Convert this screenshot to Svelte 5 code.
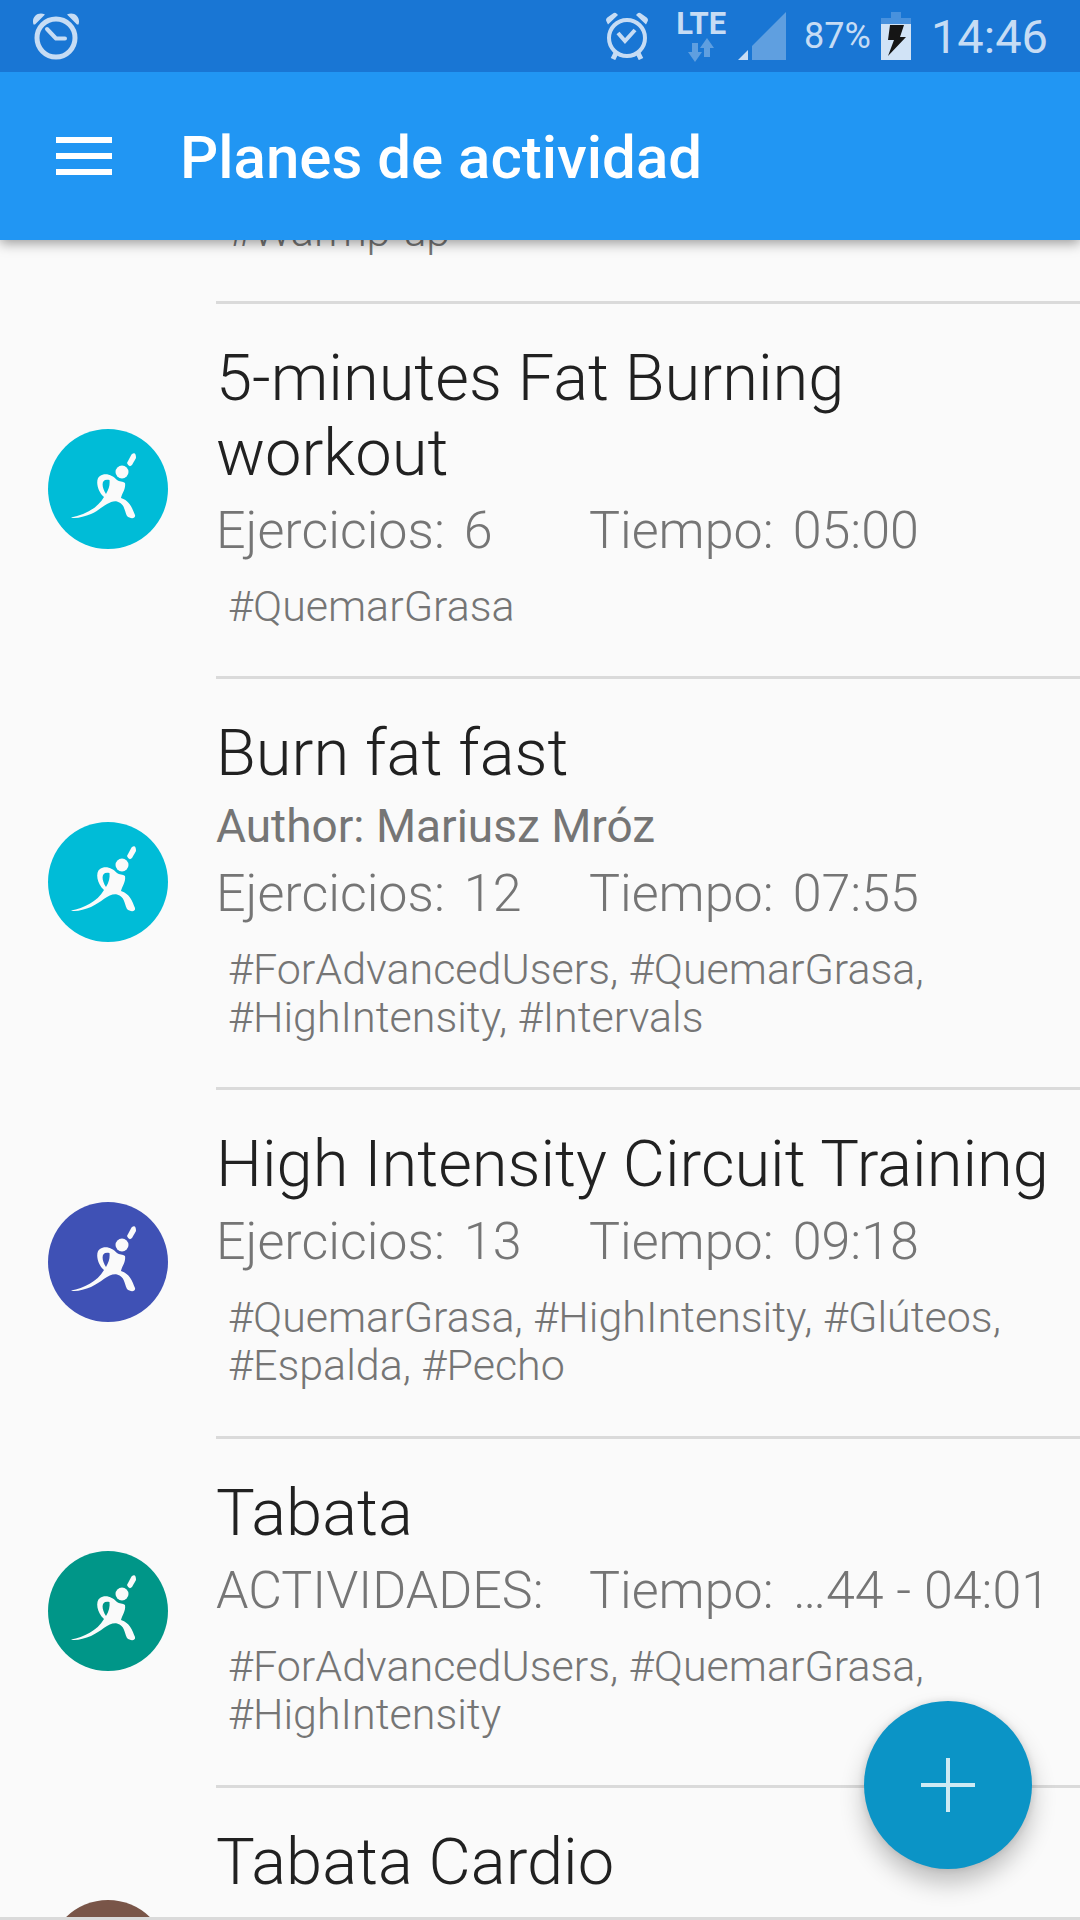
<script>
  const plans = [
    { id: 1, tags: "#Warmp-up" },
    {
      id: 2,
      name: "5-minutes Fat Burning workout",
      color: "#00bcd7",
      countLabel: "Ejercicios:",
      count: "6",
      time: "05:00",
      tags: "#QuemarGrasa"
    },
    {
      id: 3,
      name: "Burn fat fast",
      author: "Mariusz Mróz",
      color: "#00bcd7",
      countLabel: "Ejercicios:",
      count: "12",
      time: "07:55",
      tags: "#ForAdvancedUsers, #QuemarGrasa, #HighIntensity, #Intervals"
    },
    {
      id: 4,
      name: "High Intensity Circuit Training",
      color: "#3f51b5",
      countLabel: "Ejercicios:",
      count: "13",
      time: "09:18",
      tags: "#QuemarGrasa, #HighIntensity, #Glúteos, #Espalda, #Pecho"
    },
    {
      id: 5,
      name: "Tabata",
      color: "#009688",
      countLabel: "ACTIVIDADES:",
      count: "",
      time: "…44 - 04:01",
      tags: "#ForAdvancedUsers, #QuemarGrasa, #HighIntensity"
    },
    { id: 6, name: "Tabata Cardio", color: "#795548" }
  ]
</script>

<div class="screen">
  <div class="status">
    <svg class="alarm" viewBox="0 0 48 48" width="48" height="48">
      <circle cx="24" cy="26" r="19" fill="none" stroke="currentColor" stroke-width="5" />
      <path d="M15 17l9 9.500h9" fill="none" stroke="currentColor" stroke-width="4" stroke-linecap="round" stroke-linejoin="round" />
      <path d="M1.500 12.500C-1 5 6 -1 13 2.500L3 12.500zM46.500 12.500C49 5 42 -1 35 2.500L45 12.500z" fill="currentColor" />
    </svg>
    <div class="right">
      <svg viewBox="0 0 44 48" width="44" height="48">
        <circle cx="22" cy="26" r="18" fill="none" stroke="currentColor" stroke-width="4" />
        <path d="M13 21l7 8 10-11" fill="none" stroke="currentColor" stroke-width="4" />
        <path d="M3 12.500l-1.500-3Q0 7 3 5L8 1.500q2-1.500 4 .500l1 1zM41 12.500l1.500-3Q44 7 41 5L36 1.500q-2-1.500-4 .500l-1 1z" fill="currentColor" />
        <path d="M11 41l-3 6M33 41l3 6" stroke="currentColor" stroke-width="5" />
      </svg>
      <div class="network">
        <span>LTE</span>
        <svg viewBox="0 0 28 24" width="28" height="24">
          <path d="M5 5h6v9h4l-7 10-7-10h4zM17 19h6v-9h4L20 0l-7 10h4z" fill="#5f9fe0" />
        </svg>
      </div>
      <svg class="signal" viewBox="0 0 48 48" width="48" height="48">
        <path d="M48 0v48H14V34z" fill="#5f9fe0" />
        <path d="M10 38v10H0z" fill="currentColor" />
      </svg>
      <span class="percent">87%</span>
      <svg class="battery" viewBox="0 0 30 48" width="30" height="48">
        <path d="M10 0h10v6h10v6H0V6h10z" fill="#4891dd" />
        <path d="M0 12h30v36H0z" fill="#d1e3f6" />
        <path d="M9 13h14l-4 12h6L7 44l6-16H7z" fill="#151515" />
      </svg>
      <time>14:46</time>
    </div>
  </div>

  <header>
    <button class="menu" aria-label="Menu">
      <i></i>
      <i></i>
      <i></i>
    </button>
    <h1>Planes de actividad</h1>
  </header>

  <main>
    <ul>
      {#each plans as plan (plan.id)}
        <li>
          <div class="avatar">
            {#if plan.color}
              <svg viewBox="0 0 120 120" width="120" height="120">
                <circle cx="60" cy="60" r="60" fill={plan.color} />
                <g fill="#fafafa">
                  <circle cx="74" cy="43" r="6.500" />
                  <path d="M79 34L83.500 25.500Q88 22 88 29L84 36Q81 39 79 34z" />
                  <path fill-rule="evenodd" d="M23 88.500C36 86 49 80 56 68C49 62 47 50 52 47C57 43 65 46 69 51C71 53 75 52 77 54C78 60 74 64 73 69C82 72 84 79 87 86C88 90 82 90 79 87C76 81 77 75 69 72.500C61 71 54 80 43 85C36 88 27 90 23 88.500zM58 65C61 60 62 56 61.500 51C53 49 53 57 58 65z" />
                </g>
              </svg>
            {/if}
          </div>
          <div class="info">
            {#if plan.name}
              <h2>{plan.name}</h2>
            {/if}
            {#if plan.author}
              <p class="author">Author: {plan.author}</p>
            {/if}
            {#if plan.time}
              <div class="stats">
                <div><span>{plan.countLabel}</span><span>{plan.count}</span></div>
                <div><span>Tiempo:</span><span>{plan.time}</span></div>
              </div>
            {/if}
            {#if plan.tags}
              <p class="tags">{plan.tags}</p>
            {/if}
          </div>
        </li>
      {/each}
    </ul>
  </main>

  <button class="add" aria-label="Add">
    <svg viewBox="0 0 54 54" width="54" height="54">
      <path d="M27 0v54M0 27h54" stroke="#ceeaf4" stroke-width="4" />
    </svg>
  </button>
</div>

<style>
  :global(body) {
    margin: 0;
    background: #fafafa;
  }
  .screen {
    display: flex;
    flex-direction: column;
    height: 100vh;
    box-sizing: border-box;
    border-bottom: 3px solid #dadada;
    font-family: Roboto, sans-serif;
    color: #757575;
  }
  .status {
    position: relative;
    z-index: 2;
    display: flex;
    justify-content: space-between;
    align-items: center;
    height: 72px;
    padding: 0 32px;
    background: #1976d4;
    color: #c6dcf4;
  }
  .right {
    display: flex;
    align-items: center;
  }
  .network {
    display: flex;
    flex-direction: column;
    align-items: center;
    margin-left: 27px;
    font-size: 31px;
    line-height: 28px;
    font-weight: 700;
  }
  .signal {
    margin-left: 12px;
  }
  .percent {
    margin-left: 18px;
    font-size: 36px;
  }
  .battery {
    margin-left: 10px;
  }
  time {
    margin-left: 20px;
    font-size: 47px;
  }
  header {
    position: relative;
    z-index: 1;
    display: flex;
    align-items: center;
    height: 168px;
    padding: 0 56px;
    background: #2196f3;
    box-shadow: 0 3px 12px rgba(0, 0, 0, 0.4);
  }
  button {
    border: none;
    padding: 0;
    cursor: pointer;
  }
  .menu {
    display: flex;
    flex-direction: column;
    gap: 10px;
    width: 56px;
    background: none;
  }
  .menu i {
    height: 6px;
    background: #fff;
  }
  h1 {
    margin: 0 0 0 68px;
    padding-top: 4px;
    font-size: 60px;
    line-height: 72px;
    font-weight: 500;
    color: #fff;
  }
  main {
    flex: 1;
    min-height: 0;
    overflow: hidden;
  }
  ul {
    margin: -94px 0 0;
    padding: 0;
    list-style: none;
  }
  li {
    display: flex;
    align-items: center;
    gap: 48px;
    padding-left: 48px;
  }
  .avatar {
    flex: none;
    width: 120px;
    height: 120px;
  }
  .info {
    flex: 1;
    min-width: 0;
    min-height: 349px;
    padding: 37px 24px 46px 0;
    border-top: 3px solid #dadada;
    box-sizing: border-box;
  }
  li:first-child .info {
    min-height: 0;
  }
  h2 {
    margin: 0;
    font-size: 65px;
    line-height: 75px;
    font-weight: 300;
    color: #212121;
  }
  .author {
    margin: 8px 0 0;
    font-size: 46px;
    line-height: 55px;
    font-weight: 400;
  }
  .stats {
    display: grid;
    grid-template-columns: 373px 1fr;
    margin-top: 10px;
    font-size: 52px;
    line-height: 60px;
    font-weight: 300;
    white-space: nowrap;
  }
  .stats div {
    display: flex;
    gap: 19px;
  }
  .tags {
    margin: 21px 0 0 12px;
    font-size: 43px;
    line-height: 48px;
    font-weight: 300;
  }
  .add {
    position: fixed;
    right: 48px;
    bottom: 51px;
    display: grid;
    place-items: center;
    width: 168px;
    height: 168px;
    border-radius: 50%;
    background: #0b94c6;
    box-shadow: 0 14px 24px rgba(0, 0, 0, 0.24), 0 0 8px rgba(0, 0, 0, 0.12);
  }
</style>
